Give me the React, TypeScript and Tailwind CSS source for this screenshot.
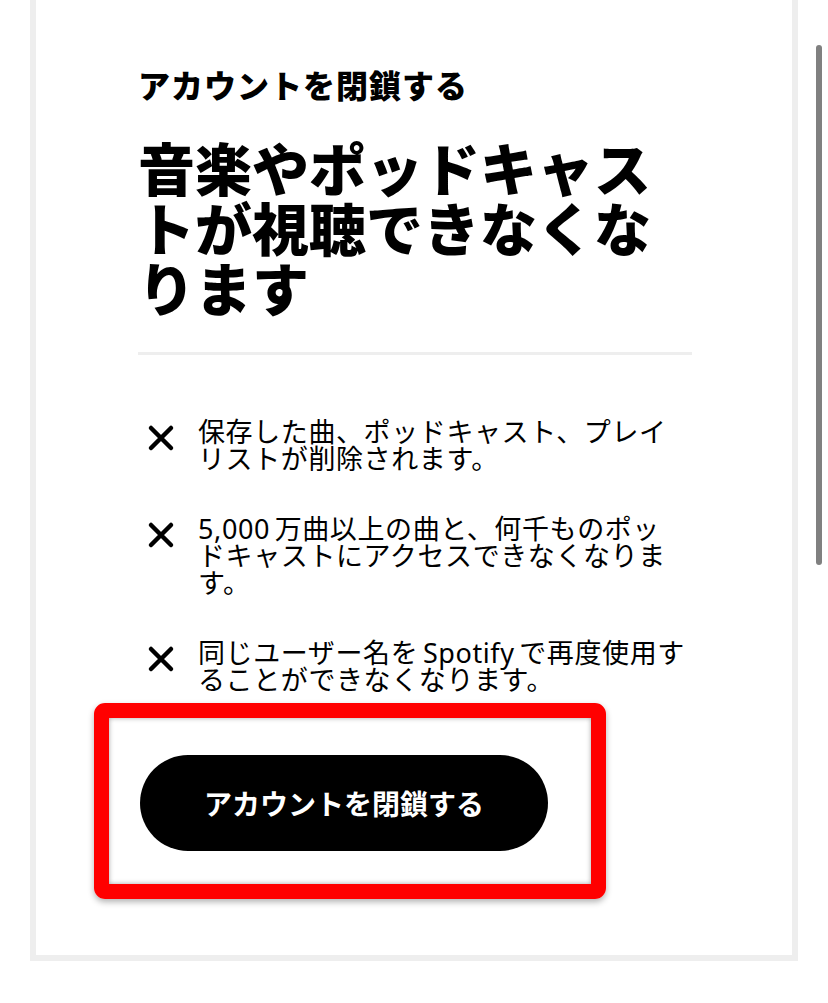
import React from "react";

const items = [
  "保存した曲、ポッドキャスト、プレイリストが削除されます。",
  "5,000 万曲以上の曲と、何千ものポッドキャストにアクセスできなくなります。",
  "同じユーザー名を Spotify で再度使用することができなくなります。",
];

const CrossIcon: React.FC = () => (
  <svg width="28" height="28" viewBox="0 0 28 28" className="shrink-0">
    <path d="M4 4 L24 24 M24 4 L4 24" stroke="#000" strokeWidth="4.5" strokeLinecap="round" fill="none" />
  </svg>
);

const App: React.FC = () => {
  return (
    <div
      className="relative min-h-screen bg-white text-black"
      style={{ fontFamily: '"Noto Sans CJK JP", "Noto Sans", sans-serif' }}
    >
      <div className="ml-[30px] w-[768px] h-[961px] border-x-[6px] border-b-[6px] border-[#eeeeee] bg-white">
        <div className="pl-[102px] pt-[64px] w-[656px]">
          <h2 className="text-[32px] font-[900] leading-[40px] tracking-[1px]">アカウントを閉鎖する</h2>
          <h1 className="mt-[32px] text-[57px] font-[900] leading-[60px]">
            音楽やポッドキャストが視聴できなくなります
          </h1>
          <div className="mt-[36px] h-[3px] bg-[#eeeeee]" />

          <ul className="mt-[63px] flex flex-col gap-[43px]">
            {items.map((text) => (
              <li key={text} className="flex pl-[9px]">
                <div className="mt-[6px]">
                  <CrossIcon />
                </div>
                <p
                  className="ml-[23px] w-[489px] text-[27px] leading-[27px] tracking-[0.6px] [word-spacing:-3px]"
                  style={{ fontFamily: '"Noto Sans", "Noto Sans CJK JP", sans-serif' }}
                >
                  {text}
                </p>
              </li>
            ))}
          </ul>

          <div className="relative mt-[62px] ml-[2px] w-[408px] h-[96px]">
            <button className="w-full h-full rounded-full bg-black text-white text-[28px] font-bold">
              アカウントを閉鎖する
            </button>
            {/* red annotation box */}
            <div className="pointer-events-none absolute -left-[46px] -top-[52px] w-[512px] h-[196px] rounded-[11px] border-[15px] border-[#ff0000] shadow-[0_3px_6px_rgba(0,0,0,0.3),inset_0_0_5px_rgba(0,0,0,0.35)]" />
          </div>
        </div>
      </div>

      {/* scrollbar */}
      <div className="absolute left-[816px] top-[45px] w-[6px] h-[520px] rounded-full bg-[#808080]" />
    </div>
  );
};

export default App;
